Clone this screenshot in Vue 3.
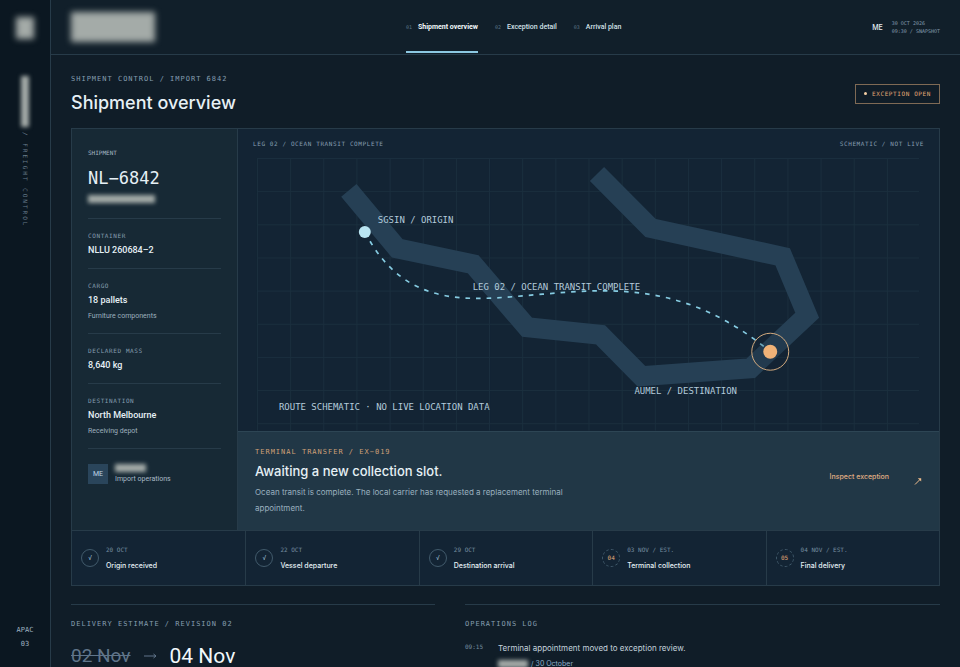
<script setup>
const tabs = [
  { no: '01', label: 'Shipment overview', active: true },
  { no: '02', label: 'Exception detail', active: false },
  { no: '03', label: 'Arrival plan', active: false },
]

const facts = [
  { label: 'CONTAINER', value: 'NLLU 260684–2' },
  { label: 'CARGO', value: '18 pallets', note: 'Furniture components' },
  { label: 'DECLARED MASS', value: '8,640 kg' },
  { label: 'DESTINATION', value: 'North Melbourne', note: 'Receiving depot' },
]

const steps = [
  { mark: '√', date: '20 OCT', name: 'Origin received', done: true },
  { mark: '√', date: '22 OCT', name: 'Vessel departure', done: true },
  { mark: '√', date: '29 OCT', name: 'Destination arrival', done: true },
  { mark: '04', date: '03 NOV / EST.', name: 'Terminal collection', done: false },
  { mark: '05', date: '04 NOV / EST.', name: 'Final delivery', done: false },
]

const columns = Array.from({ length: 20 }, (_, i) => 19.5 + i * 33.2)
const rows = Array.from({ length: 9 }, (_, i) => 0.5 + i * 33.2)
</script>

<template>
  <div class="app">
    <aside class="rail">
      <span class="redacted rail-logo"></span>
      <div class="rail-name">
        <span class="redacted rail-brand"></span>
        <span class="rail-text">/ FREIGHT CONTROL</span>
      </div>
      <div class="rail-region"><span>APAC</span><span>03</span></div>
    </aside>

    <div class="page">
      <header class="topbar">
        <span class="redacted brand"></span>
        <nav class="tabs">
          <a v-for="t in tabs" :key="t.no" href="#" class="tab" :class="{ active: t.active }">
            <span class="tab-no">{{ t.no }}</span>{{ t.label }}
          </a>
        </nav>
        <div class="session">
          <span class="session-user">ME</span>
          <span class="session-time">30 OCT 2026<br />09:30 / SNAPSHOT</span>
        </div>
      </header>

      <main class="content">
        <div class="heading">
          <div>
            <p class="eyebrow">SHIPMENT CONTROL / IMPORT 6842</p>
            <h1>Shipment overview</h1>
          </div>
          <span class="badge"><i class="badge-dot"></i>EXCEPTION OPEN</span>
        </div>

        <section class="board">
          <div class="board-top">
            <div class="panel">
              <div class="shipment">
                <p class="micro">SHIPMENT</p>
                <p class="shipment-id">NL−6842</p>
                <span class="redacted shipment-ref"></span>
              </div>
              <div v-for="f in facts" :key="f.label" class="fact">
                <p class="label">{{ f.label }}</p>
                <p class="fact-value">{{ f.value }}</p>
                <p v-if="f.note" class="fact-note">{{ f.note }}</p>
              </div>
              <div class="owner">
                <span class="avatar">ME</span>
                <div class="owner-text">
                  <span class="redacted owner-name"></span>
                  <span class="owner-role">Import operations</span>
                </div>
              </div>
            </div>

            <div class="route">
              <div class="route-head">
                <span class="label">LEG 02 / OCEAN TRANSIT COMPLETE</span>
                <span class="label">SCHEMATIC / NOT LIVE</span>
              </div>
              <svg class="map" viewBox="0 0 702 273" role="img" aria-label="Route schematic">
                <g class="grid">
                  <line v-for="x in columns" :key="'c' + x" :x1="x" y1="0" :x2="x" y2="273" />
                  <line v-for="y in rows" :key="'r' + y" x1="19" :y1="y" x2="682" :y2="y" />
                </g>
                <path class="land" d="M111 32.5L159.5 90.5L235.5 106.5L289.5 169.5L363 177L404 218.5L513.5 210.5L570 157.5L545.5 99L413 70L359.5 16" />
                <path class="leg" d="M127 74C170 157 240 141 310 136C385 129 455 129 533 194" />
                <circle class="origin" cx="127" cy="74" r="6" />
                <circle class="target-ring" cx="533" cy="194" r="18.5" />
                <circle class="target" cx="533" cy="194" r="7" />
                <text x="140" y="65">SGSIN / ORIGIN</text>
                <text x="235" y="132">LEG 02 / OCEAN TRANSIT COMPLETE</text>
                <text x="397" y="236">AUMEL / DESTINATION</text>
                <text x="41" y="252">ROUTE SCHEMATIC · NO LIVE LOCATION DATA</text>
              </svg>
              <div class="alert">
                <div class="alert-text">
                  <p class="eyebrow warm">TERMINAL TRANSFER / EX−019</p>
                  <h2>Awaiting a new collection slot.</h2>
                  <p class="alert-body">Ocean transit is complete. The local carrier has requested a replacement terminal appointment.</p>
                </div>
                <a href="#" class="inspect">
                  Inspect exception
                  <svg class="inspect-icon" viewBox="0 0 8 8" aria-hidden="true">
                    <path d="M1 7.5L6 2.5" />
                    <path class="inspect-head" d="M3.8 1.2H7.2V4.6Z" />
                  </svg>
                </a>
              </div>
            </div>
          </div>

          <ol class="steps">
            <li v-for="s in steps" :key="s.name" class="step">
              <span class="step-mark" :class="{ pending: !s.done }">{{ s.mark }}</span>
              <div>
                <p class="micro dim">{{ s.date }}</p>
                <p class="step-name">{{ s.name }}</p>
              </div>
            </li>
          </ol>
        </section>

        <div class="lower">
          <section class="lower-block">
            <p class="eyebrow">DELIVERY ESTIMATE / REVISION 02</p>
            <div class="estimate">
              <s class="old-date">02 Nov</s>
              <svg class="arrow" viewBox="0 0 13 8" aria-hidden="true"><path d="M0 4H12M9.5 2L12 4L9.5 6" /></svg>
              <span class="new-date">04 Nov</span>
            </div>
          </section>
          <section class="lower-block">
            <p class="eyebrow">OPERATIONS LOG</p>
            <div class="log">
              <time class="micro dim">09:15</time>
              <div>
                <p class="log-text">Terminal appointment moved to exception review.</p>
                <p class="log-meta"><span class="redacted log-author"></span>/ 30 October</p>
              </div>
            </div>
          </section>
        </div>
      </main>
    </div>
  </div>
</template>

<style>
html {
  scrollbar-width: none;
  background: #101d28;
}
body {
  margin: 0;
}
</style>

<style scoped>
.app {
  --mono: "DejaVu Sans Mono", monospace;
  --compact: Roboto, "Liberation Sans", sans-serif;
  --line: #273b49;
  --muted: #859db0;
  --warm: #cfa077;
  display: flex;
  min-height: 100vh;
  color: #e6f0f5;
  background: #101d28;
  font-family: Inter, "Liberation Sans", sans-serif;
  font-size: 7px;
}
p, h1, h2, ol {
  margin: 0;
  padding: 0;
}
a {
  color: inherit;
  text-decoration: none;
}
.redacted {
  display: block;
  background: #a4aba8;
  filter: blur(3px);
}

.rail {
  position: sticky;
  top: 0;
  box-sizing: border-box;
  flex: none;
  display: flex;
  flex-direction: column;
  align-items: center;
  width: 51px;
  height: 100vh;
  padding: 17px 0 16px;
  background: #0b1721;
  border-right: 1px solid var(--line);
}
.rail-logo {
  width: 18px;
  height: 22px;
}
.rail-name {
  display: flex;
  flex-direction: column;
  align-items: center;
  gap: 5px;
  padding-top: 37px;
}
.rail-brand {
  width: 8px;
  height: 51px;
  filter: blur(2px);
}
.rail-text {
  font: 6px/8px var(--mono);
  letter-spacing: 2px;
  writing-mode: vertical-rl;
  color: #677b8b;
}
.rail-region {
  display: flex;
  flex-direction: column;
  align-items: center;
  margin-top: auto;
  font: 7px/14px var(--mono);
  color: #9fb2c0;
}

.page {
  flex: 1;
  min-width: 0;
}
.topbar {
  display: flex;
  justify-content: space-between;
  align-items: center;
  height: 54px;
  padding: 0 20px;
  background: #111f2a;
  border-bottom: 1px solid var(--line);
}
.brand {
  width: 84px;
  height: 30px;
}
.tabs {
  display: flex;
  align-self: stretch;
  gap: 17px;
  font-family: var(--compact);
}
.tab {
  display: flex;
  align-items: center;
  gap: 6px;
  border-bottom: 2px solid transparent;
  padding-top: 2px;
  margin-bottom: 1px;
  font-weight: 500;
  color: #d3e0e8;
}
.tab.active {
  font-weight: 700;
  color: #f2f8fb;
  border-color: #8cc8e2;
}
.tab-no {
  font: 5px/8px var(--mono);
  color: #5d7689;
}
.session {
  display: flex;
  align-items: center;
  gap: 9px;
}
.session-user {
  font-weight: 500;
}
.session-time {
  font: 5px/8px var(--mono);
  color: var(--muted);
}

.content {
  padding: 18px 20px 20px;
}
.heading {
  display: flex;
  justify-content: space-between;
  align-items: center;
  padding-bottom: 12px;
}
.eyebrow {
  font: 7px/12px var(--mono);
  letter-spacing: 1px;
  color: var(--muted);
}
.warm {
  color: var(--warm);
}
h1 {
  padding-top: 5px;
  font-size: 18px;
  font-weight: 500;
  line-height: 26px;
}
.badge {
  display: flex;
  align-items: center;
  gap: 5px;
  margin-bottom: 2px;
  padding: 5px 8px;
  border: 1px solid #7f6a55;
  font: 6px/8px var(--mono);
  letter-spacing: 0.1em;
  color: #e0a877;
}
.badge-dot {
  width: 3px;
  height: 3px;
  border-radius: 50%;
  background: #f6cfa4;
}

.board {
  border: 1px solid var(--line);
  background: #132434;
}
.board-top {
  display: grid;
  grid-template-columns: 166px 1fr;
}
.panel {
  padding: 19px 16px 18px;
  background: #172935;
  border-right: 1px solid var(--line);
  font-family: var(--compact);
}
.micro {
  font: 6px/10px var(--mono);
  color: #a3b6c2;
}
.label {
  font: 6px/10px var(--mono);
  letter-spacing: 0.1em;
  color: var(--muted);
}
.dim {
  color: #758da0;
}
.shipment {
  padding-bottom: 15px;
  border-bottom: 1px solid var(--line);
}
.shipment-id {
  padding: 9px 0 6px;
  font: 17px/22px var(--mono);
}
.shipment-ref {
  width: 67px;
  height: 8px;
  filter: blur(2px);
}
.fact {
  padding: 12px 0 10px;
  border-bottom: 1px solid var(--line);
}
.fact-value {
  padding-top: 1px;
  font-size: 9px;
  font-weight: 500;
  line-height: 16px;
}
.fact-note {
  padding: 2px 0 1px;
  line-height: 12px;
  color: #9db0bd;
}
.owner {
  display: flex;
  gap: 7px;
  padding-top: 15px;
}
.avatar {
  width: 20px;
  height: 20px;
  background: #2a455b;
  line-height: 20px;
  text-align: center;
  color: #bcd5e6;
}
.owner-text {
  display: flex;
  flex-direction: column;
  gap: 2px;
}
.owner-name {
  width: 31px;
  height: 8px;
  filter: blur(2px);
}
.owner-role {
  line-height: 10px;
  color: #a9bac6;
}

.route {
  display: flex;
  flex-direction: column;
  min-width: 0;
}
.route-head {
  display: flex;
  justify-content: space-between;
  padding: 10px 15px 9px;
}
.map {
  display: block;
  width: 100%;
}
.grid line {
  stroke: #1b2f3e;
  stroke-width: 1;
}
.land {
  fill: none;
  stroke: #264055;
  stroke-width: 20;
}
.leg {
  fill: none;
  stroke: #86cce2;
  stroke-width: 1.7;
  stroke-dasharray: 4.6 6;
}
.origin {
  fill: #b9e4f1;
}
.target {
  fill: #f0b277;
}
.target-ring {
  fill: #132434;
  fill-opacity: 0.2;
  stroke: #d3ab7e;
  stroke-width: 1;
}
.map text {
  font: 9px "DejaVu Sans Mono", monospace;
  fill: #b3cbdb;
}
.alert {
  flex: 1;
  display: flex;
  justify-content: space-between;
  align-items: center;
  padding: 14px 17px;
  background: #213746;
  border-top: 1px solid #2d4554;
}
h2 {
  padding: 4px 0;
  font-size: 13px;
  font-weight: 500;
  line-height: 18px;
}
.alert-body {
  max-width: 320px;
  font-size: 8px;
  line-height: 16px;
  color: #9ab0bf;
}
.inspect {
  display: flex;
  align-items: center;
  gap: 25px;
  margin-bottom: 8px;
  font-weight: 500;
  color: #e0ae84;
}
.inspect-icon {
  width: 8px;
  height: 8px;
  margin-top: 8px;
  fill: none;
  stroke: #f0bd8c;
  stroke-width: 1;
}
.inspect-head {
  fill: #f0bd8c;
  stroke: none;
}
.steps {
  display: grid;
  grid-template-columns: repeat(5, 1fr);
  list-style: none;
  border-top: 1px solid var(--line);
}
.step {
  display: flex;
  align-items: center;
  gap: 7px;
  padding: 14px 9px 13px;
}
.step + .step {
  border-left: 1px solid var(--line);
}
.step-mark {
  width: 16px;
  height: 16px;
  border: 1px solid #415a6b;
  border-radius: 50%;
  font: 6px/16px var(--mono);
  text-align: center;
  color: #b9dbe8;
}
.step-mark.pending {
  border-style: dashed;
  color: #e0a877;
}
.step-name {
  padding-top: 4px;
  font-weight: 500;
  line-height: 13px;
}

.lower {
  display: grid;
  grid-template-columns: 364fr 475fr;
  gap: 30px;
  padding-top: 18px;
}
.lower-block {
  padding-top: 13px;
  border-top: 1px solid var(--line);
}
.estimate {
  display: flex;
  align-items: center;
  gap: 13px;
  padding-top: 12px;
  font-family: var(--compact);
  font-size: 21px;
  line-height: 28px;
}
.old-date {
  font-size: 19px;
  color: #60758a;
}
.arrow {
  width: 13px;
  height: 8px;
  fill: none;
  stroke: #60758a;
}
.new-date {
  color: #f2f8fb;
}
.log {
  display: flex;
  gap: 15px;
  padding-top: 12px;
}
.log-text {
  font-size: 8px;
  line-height: 12px;
  color: #c3d2dc;
}
.log-meta {
  display: flex;
  align-items: center;
  gap: 3px;
  padding-top: 5px;
  line-height: 10px;
  color: #8fb0c8;
}
.log-author {
  width: 30px;
  height: 8px;
  filter: blur(2px);
}
</style>
